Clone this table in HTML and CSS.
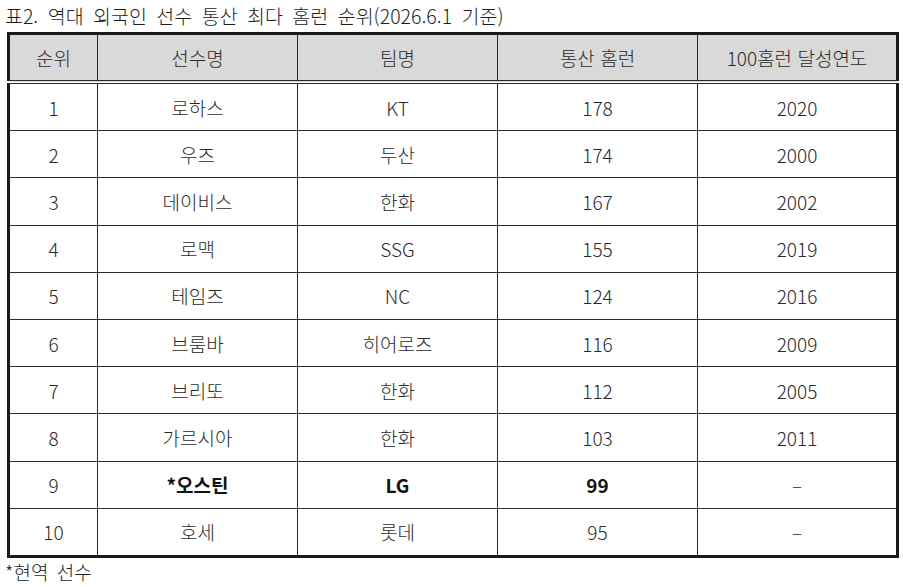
FILE: index.html
```html
<!DOCTYPE html>
<html lang="ko">
<head>
<meta charset="utf-8">
<link rel="stylesheet" href="styles.css">
</head>
<body>
<div class="caption">표2. 역대 외국인 선수 통산 최다 홈런 순위(2026.6.1 기준)</div>
<table class="rank">
  <colgroup>
    <col class="c1"><col class="c2"><col class="c3"><col class="c4"><col class="c5">
  </colgroup>
  <thead>
    <tr><th>순위</th><th>선수명</th><th>팀명</th><th>통산 홈런</th><th>100홈런 달성연도</th></tr>
  </thead>
  <tbody>
    <tr><td>1</td><td>로하스</td><td>KT</td><td>178</td><td>2020</td></tr>
    <tr><td>2</td><td>우즈</td><td>두산</td><td>174</td><td>2000</td></tr>
    <tr><td>3</td><td>데이비스</td><td>한화</td><td>167</td><td>2002</td></tr>
    <tr><td>4</td><td>로맥</td><td>SSG</td><td>155</td><td>2019</td></tr>
    <tr><td>5</td><td>테임즈</td><td>NC</td><td>124</td><td>2016</td></tr>
    <tr><td>6</td><td>브룸바</td><td>히어로즈</td><td>116</td><td>2009</td></tr>
    <tr><td>7</td><td>브리또</td><td>한화</td><td>112</td><td>2005</td></tr>
    <tr><td>8</td><td>가르시아</td><td>한화</td><td>103</td><td>2011</td></tr>
    <tr><td>9</td><td class="strong">*오스틴</td><td class="strong">LG</td><td class="strong">99</td><td>–</td></tr>
    <tr><td>10</td><td>호세</td><td>롯데</td><td>95</td><td>–</td></tr>
  </tbody>
</table>
<div class="note">*현역 선수</div>
</body>
</html>
```
FILE: styles.css
```css
html, body {
  margin: 0;
  padding: 0;
  background: #fff;
}
body {
  font-family: "Noto Sans CJK KR", "Noto Sans", sans-serif;
  color: #2a2a2a;
}
.caption {
  font-size: 19.5px;
  line-height: 24px;
  padding: 4px 0 0 5px;
  height: 31px;
  box-sizing: border-box;
  color: #1e1e1e;
  font-weight: 300;
  word-spacing: 4px;
}
.rank {
  border-collapse: collapse;
  margin: 1px 0 0 7px;
  width: 892px;
  border: 3px solid #1a1a1a;
  table-layout: fixed;
}
.c1 { width: 89px; }
.c2 { width: 200px; }
.c3 { width: 200px; }
.c4 { width: 200px; }
.c5 { width: 200px; }
.rank th, .rank td {
  border: 1px solid #2b2b2b;
  text-align: center;
  padding: 0;
  font-size: 19px;
  font-weight: 300;
  color: #2a2a2a;
}
.rank th {
  background: #d9d9d9;
  height: 45px;
  border-bottom: 4px double #2b2b2b;
}
.rank td {
  height: 46.2px;
}
.rank td.strong {
  font-weight: 700;
  color: #111;
}
.note {
  font-size: 19px;
  line-height: 22px;
  padding: 3px 0 0 5px;
  color: #1e1e1e;
  font-weight: 300;
  word-spacing: 3px;
}
```
